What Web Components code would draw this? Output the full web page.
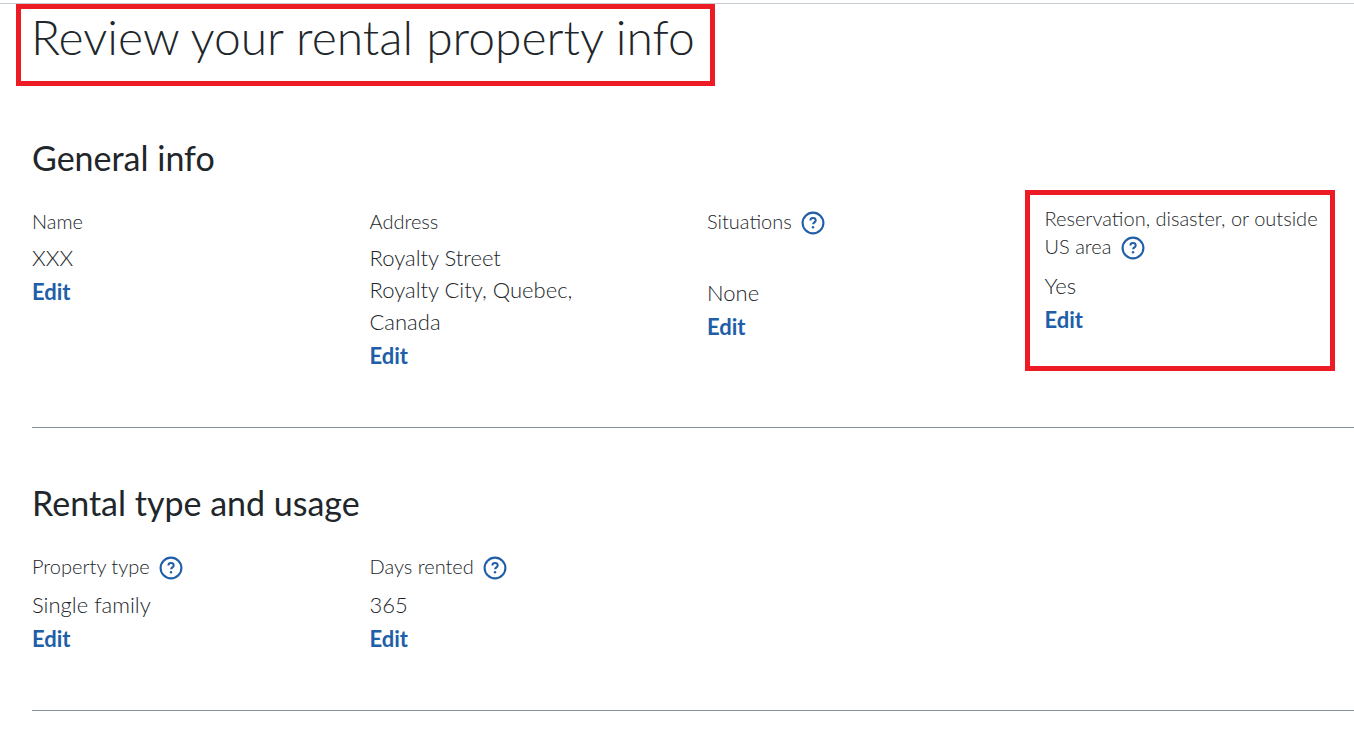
<!DOCTYPE html>
<html lang="en">
<head>
<meta charset="utf-8">
<title>Review your rental property info</title>
<style>
body{margin:0;background:#fff;color:#21262a;font-family:Lato,"Liberation Sans",sans-serif;font-weight:300}
</style>
</head>
<body>
<review-page>
  <page-title slot="title">Review your rental property info</page-title>
  <info-section heading="General info">
    <info-field label="Name">XXX</info-field>
    <info-field label="Address">Royalty Street<br>Royalty City, Quebec,<br>Canada</info-field>
    <info-field label="Situations" help spaced>None</info-field>
    <info-field label="Reservation, disaster, or outside US area" help marked>Yes</info-field>
  </info-section>
  <info-section heading="Rental type and usage">
    <info-field label="Property type" help>Single family</info-field>
    <info-field label="Days rented" help>365</info-field>
  </info-section>
</review-page>
<script>
const RED = '#ed1c24';

class ShadowElement extends HTMLElement {
  constructor() {
    super();
    this.attachShadow({ mode: 'open' });
  }
  connectedCallback() {
    this.shadowRoot.innerHTML = this.render();
  }
}

customElements.define('review-page', class extends ShadowElement {
  render() {
    return `<style>
      :host{display:block;padding-top:3px}
      header{border-top:1px solid #c6cdd2;padding-left:16px;display:flex}
      main{padding-left:32px}
    </style>
    <header><slot name="title"></slot></header>
    <main><slot></slot></main>`;
  }
});

customElements.define('page-title', class extends ShadowElement {
  render() {
    return `<style>
      :host{display:block;border:5px solid ${RED};padding:0 15px 16px 10px}
      h1{margin:0;font-size:48px;line-height:56px;font-weight:300}
    </style>
    <h1><slot></slot></h1>`;
  }
});

customElements.define('info-section', class extends ShadowElement {
  render() {
    return `<style>
      :host{display:block;padding:53px 0 54px;border-bottom:1px solid #84929c}
      :host(:first-of-type){padding-top:50px}
      h2{margin:0 0 24px;font-size:34px;line-height:44px;font-weight:400}
      .grid{display:grid;grid-template-columns:repeat(4,minmax(0,1fr));column-gap:28px}
    </style>
    <section><h2>${this.getAttribute('heading')}</h2>
    <div class="grid"><slot></slot></div></section>`;
  }
});

customElements.define('help-button', class extends ShadowElement {
  render() {
    return `<style>
      :host{display:inline-block;vertical-align:-2px;margin:-4px 0 -4px 4px}
      button{display:block;padding:0;border:0;background:none;color:#205ea8;cursor:pointer}
      svg{display:block}
    </style>
    <button type="button" aria-label="Help"><svg width="24" height="24" viewBox="0 0 24 24" fill="none" stroke="currentColor">
      <circle cx="12" cy="12" r="10.4" stroke-width="2.1"/>
      <path d="M9.4 9.4C9.4 7.8 10.5 7 12 7s2.7 1 2.7 2.4c0 1.9-2.6 2-2.6 3.9" stroke-width="2"/>
      <circle cx="12" cy="16.2" r="1.2" fill="currentColor" stroke="none"/>
    </svg></button>`;
  }
});

customElements.define('info-field', class extends ShadowElement {
  render() {
    const help = this.hasAttribute('help') ? ' <help-button></help-button>' : '';
    return `<style>
      :host{display:block;position:relative;padding-right:30px}
      h3{margin:0 0 7px;padding-top:3px;font-size:20px;line-height:28px;font-weight:300}
      .value{font-size:22px;line-height:32px}
      a{display:block;width:max-content;margin-top:1px;font-size:22px;line-height:34px;font-weight:700;color:#205ea8;text-decoration:none}
      :host([help]) h3{margin-bottom:9px}
      :host([spaced]) h3{margin-bottom:42px}
      :host([marked]) h3{padding-top:0;margin-bottom:10px}
      :host([marked])::after{content:"";position:absolute;inset:-14px 19px 2px -20px;border:5px solid ${RED};pointer-events:none}
    </style>
    <h3>${this.getAttribute('label')}${help}</h3>
    <div class="value"><slot></slot></div>
    <a href="#">Edit</a>`;
  }
});
</script>
</body>
</html>
